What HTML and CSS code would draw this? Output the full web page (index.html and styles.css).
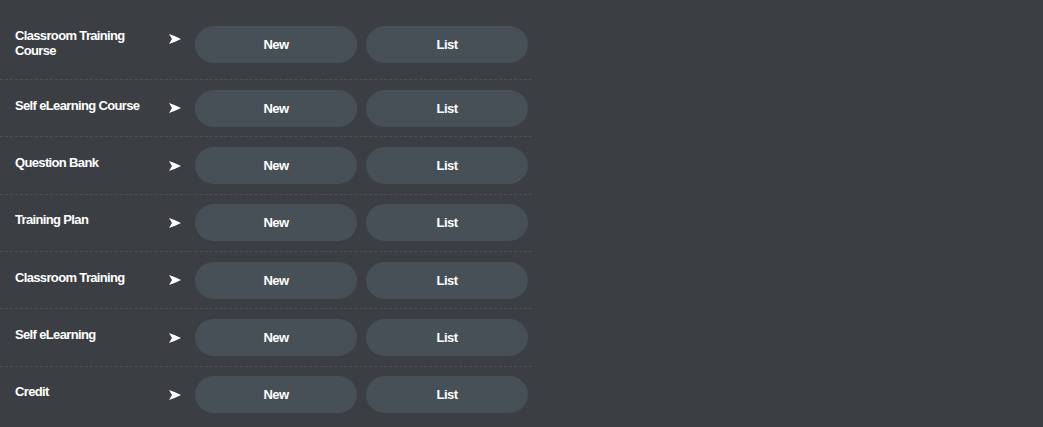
FILE: index.html
```html
<!DOCTYPE html>
<html lang="en">
<head>
  <meta charset="UTF-8" />
  <title>Training Menu</title>
  <link rel="stylesheet" href="styles.css">
</head>
<body>
  <div class="menu">
    <!-- one row per module -->
    <div class="row first">
      <div class="label">Classroom Training<br>Course</div>
      <svg class="arrow" viewBox="0 0 12 10"><path d="M0 0 C4 1.5 8 3 12 5 C8 7 4 8.5 0 10 L3 5 Z" /></svg>
      <div class="btn">New</div>
      <div class="btn">List</div>
    </div>
    <div class="row">
      <div class="label">Self eLearning Course</div>
      <svg class="arrow" viewBox="0 0 12 10"><path d="M0 0 C4 1.5 8 3 12 5 C8 7 4 8.5 0 10 L3 5 Z" /></svg>
      <div class="btn">New</div>
      <div class="btn">List</div>
    </div>
    <div class="row">
      <div class="label">Question Bank</div>
      <svg class="arrow" viewBox="0 0 12 10"><path d="M0 0 C4 1.5 8 3 12 5 C8 7 4 8.5 0 10 L3 5 Z" /></svg>
      <div class="btn">New</div>
      <div class="btn">List</div>
    </div>
    <div class="row">
      <div class="label">Training Plan</div>
      <svg class="arrow" viewBox="0 0 12 10"><path d="M0 0 C4 1.5 8 3 12 5 C8 7 4 8.5 0 10 L3 5 Z" /></svg>
      <div class="btn">New</div>
      <div class="btn">List</div>
    </div>
    <div class="row">
      <div class="label">Classroom Training</div>
      <svg class="arrow" viewBox="0 0 12 10"><path d="M0 0 C4 1.5 8 3 12 5 C8 7 4 8.5 0 10 L3 5 Z" /></svg>
      <div class="btn">New</div>
      <div class="btn">List</div>
    </div>
    <div class="row">
      <div class="label">Self eLearning</div>
      <svg class="arrow" viewBox="0 0 12 10"><path d="M0 0 C4 1.5 8 3 12 5 C8 7 4 8.5 0 10 L3 5 Z" /></svg>
      <div class="btn">New</div>
      <div class="btn">List</div>
    </div>
    <div class="row last">
      <div class="label">Credit</div>
      <svg class="arrow" viewBox="0 0 12 10"><path d="M0 0 C4 1.5 8 3 12 5 C8 7 4 8.5 0 10 L3 5 Z" /></svg>
      <div class="btn">New</div>
      <div class="btn">List</div>
    </div>
  </div>
</body>
</html>
```

FILE: styles.css
```css
body {
  margin: 0;
  background: #3b3f44;
  font-family: 'Liberation Sans', Arial, sans-serif;
  color: #fff;
}

.menu {
  width: 532px;
}

.row {
  display: flex;
  align-items: center;
  height: 56.35px;
  border-bottom: 1px dashed #4b5056;
}

.row.first {
  height: 80px;
  padding-top: 10px;
  box-sizing: border-box;
}

.row.last {
  border-bottom: none;
}

.label {
  flex-shrink: 0;
  width: 154px;
  padding-left: 15px;
  margin-bottom: 6px;
  font-size: 13px;
  font-weight: bold;
  line-height: 15px;
  letter-spacing: -0.65px;
}

.row.first .label {
  margin-bottom: 4px;
}

.arrow {
  flex-shrink: 0;
  width: 12px;
  height: 10px;
  fill: #fff;
  margin-right: 14px;
}

.row.first .arrow {
  margin-bottom: 12px;
}

.btn {
  flex-shrink: 0;
  width: 162px;
  height: 37px;
  margin-right: 9px;
  border-radius: 19px;
  background: #474f57;
  font-size: 13px;
  font-weight: bold;
  letter-spacing: -0.5px;
  display: flex;
  align-items: center;
  justify-content: center;
}
```
